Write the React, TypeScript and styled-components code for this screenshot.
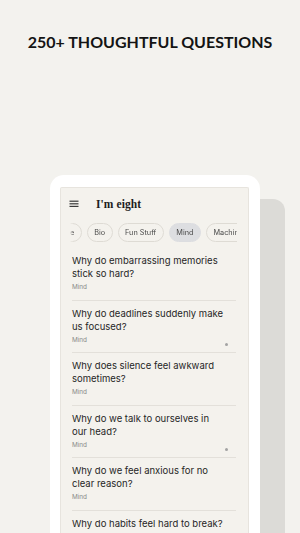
import React from "react";
import styled, { createGlobalStyle } from "styled-components";

const Global = createGlobalStyle`
  html, body { margin: 0; padding: 0; }
  body {
    width: 300px;
    height: 533px;
    overflow: hidden;
    background: #f3f2ee;
    font-family: Inter, "Noto Sans", sans-serif;
  }
`;

const Page = styled.div`
  display: flex;
  flex-direction: column;
  height: 533px;
  overflow: hidden;
`;

const Headline = styled.h1`
  margin: 0;
  padding-top: 34px;
  font-family: Lato, "Open Sans", sans-serif;
  font-weight: 700;
  font-size: 16px;
  line-height: 16px;
  color: #141414;
  text-align: center;
  letter-spacing: 0;
`;

const Stage = styled.div`
  display: flex;
  align-items: flex-start;
  margin-top: 125px;
  padding-left: 50px;
  flex: 1;
  min-height: 0;
  overflow: hidden;
`;

const PhoneFrame = styled.div`
  width: 210px;
  box-sizing: border-box;
  height: 358px;
  background: #ffffff;
  border-radius: 14px 14px 0 0;
  padding: 12px 11px 0 10px;
`;

const BackCard = styled.div`
  width: 25px;
  height: 334px;
  margin-top: 24px;
  background: #dcdbd7;
  border-radius: 0 12px 0 0;
`;

const Screen = styled.div`
  height: 100%;
  box-sizing: border-box;
  background: #f4f2ed;
  border: 1px solid #e7e4de;
  border-bottom: none;
  border-radius: 2px 2px 0 0;
  display: flex;
  flex-direction: column;
  overflow: hidden;
`;

const Header = styled.div`
  height: 31px;
  flex: none;
  display: flex;
  align-items: center;
  padding-left: 8px;
  gap: 17px;
`;

const Title = styled.span`
  font-family: "Liberation Serif", "DejaVu Serif", serif;
  font-weight: 700;
  font-size: 11.5px;
  color: #1c1c1c;
  letter-spacing: 0.1px;
`;

const ChipViewport = styled.div`
  flex: none;
  margin: 4px 11px 0 9px;
  overflow: hidden;
  -webkit-mask-image: linear-gradient(to right, transparent 0, #000 3px);
  mask-image: linear-gradient(to right, transparent 0, #000 3px);
`;

const ChipTrack = styled.div`
  display: flex;
  gap: 5px;
  margin-left: -16px;
`;

const Chip = styled.span<{ $active?: boolean }>`
  flex: none;
  height: 19px;
  box-sizing: border-box;
  display: inline-flex;
  align-items: center;
  padding: 0 6.5px;
  border-radius: 10px;
  border: 1px solid ${(p) => (p.$active ? "#dcdde0" : "#dedbd4")};
  background: ${(p) => (p.$active ? "#dddee1" : "transparent")};
  font-size: 7.3px;
  color: #4a4a4a;
  white-space: nowrap;
`;

const List = styled.div`
  margin-top: 6px;
  padding: 0 12px 0 11px;
  display: flex;
  flex-direction: column;
`;

const Item = styled.div<{ $last?: boolean }>`
  padding: 6px 0 7.5px;
  border-bottom: ${(p) => (p.$last ? "none" : "1px solid #e3e0da")};
`;

const Question = styled.div`
  font-size: 9.5px;
  line-height: 13px;
  color: #262626;
  padding-right: 10.5px;
`;

const MetaRow = styled.div`
  display: flex;
  align-items: flex-end;
  justify-content: space-between;
  margin-top: 3px;
  height: 9px;
`;

const Category = styled.span`
  font-size: 6.4px;
  line-height: 9px;
  color: #8a8a8a;
`;

const Dot = styled.span`
  width: 3px;
  height: 3px;
  border-radius: 50%;
  background: #a3a3a3;
  margin-right: 8px;
  margin-bottom: -1px;
`;

const MenuIcon = () => (
  <svg width="10" height="8" viewBox="0 0 10 8">
    <rect x="0.5" y="0.6" width="9" height="1.2" fill="#3a3a3a" />
    <rect x="0.5" y="3.2" width="9" height="1.2" fill="#3a3a3a" />
    <rect x="0.5" y="5.8" width="9" height="1.2" fill="#3a3a3a" />
  </svg>
);

const questions = [
  { text: "Why do embarrassing memories stick so hard?", dot: false },
  { text: "Why do deadlines suddenly make us focused?", dot: true },
  { text: "Why does silence feel awkward sometimes?", dot: false },
  { text: "Why do we talk to ourselves in our head?", dot: true },
  { text: "Why do we feel anxious for no clear reason?", dot: false },
  { text: "Why do habits feel hard to break?", dot: false },
];

const chips = ["Life", "Bio", "Fun Stuff", "Mind", "Machine"];

export default function App() {
  return (
    <>
      <Global />
      <Page>
        <Headline>250+ THOUGHTFUL QUESTIONS</Headline>
        <Stage>
          <PhoneFrame>
            <Screen>
              <Header>
                <MenuIcon />
                <Title>I'm eight</Title>
              </Header>
              <ChipViewport>
                <ChipTrack>
                  {chips.map((c) => (
                    <Chip key={c} $active={c === "Mind"}>
                      {c}
                    </Chip>
                  ))}
                </ChipTrack>
              </ChipViewport>
              <List>
                {questions.map((q, i) => (
                  <Item key={i} $last={i === questions.length - 1}>
                    <Question>{q.text}</Question>
                    <MetaRow>
                      <Category>Mind</Category>
                      {q.dot && <Dot />}
                    </MetaRow>
                  </Item>
                ))}
              </List>
            </Screen>
          </PhoneFrame>
          <BackCard />
        </Stage>
      </Page>
    </>
  );
}
